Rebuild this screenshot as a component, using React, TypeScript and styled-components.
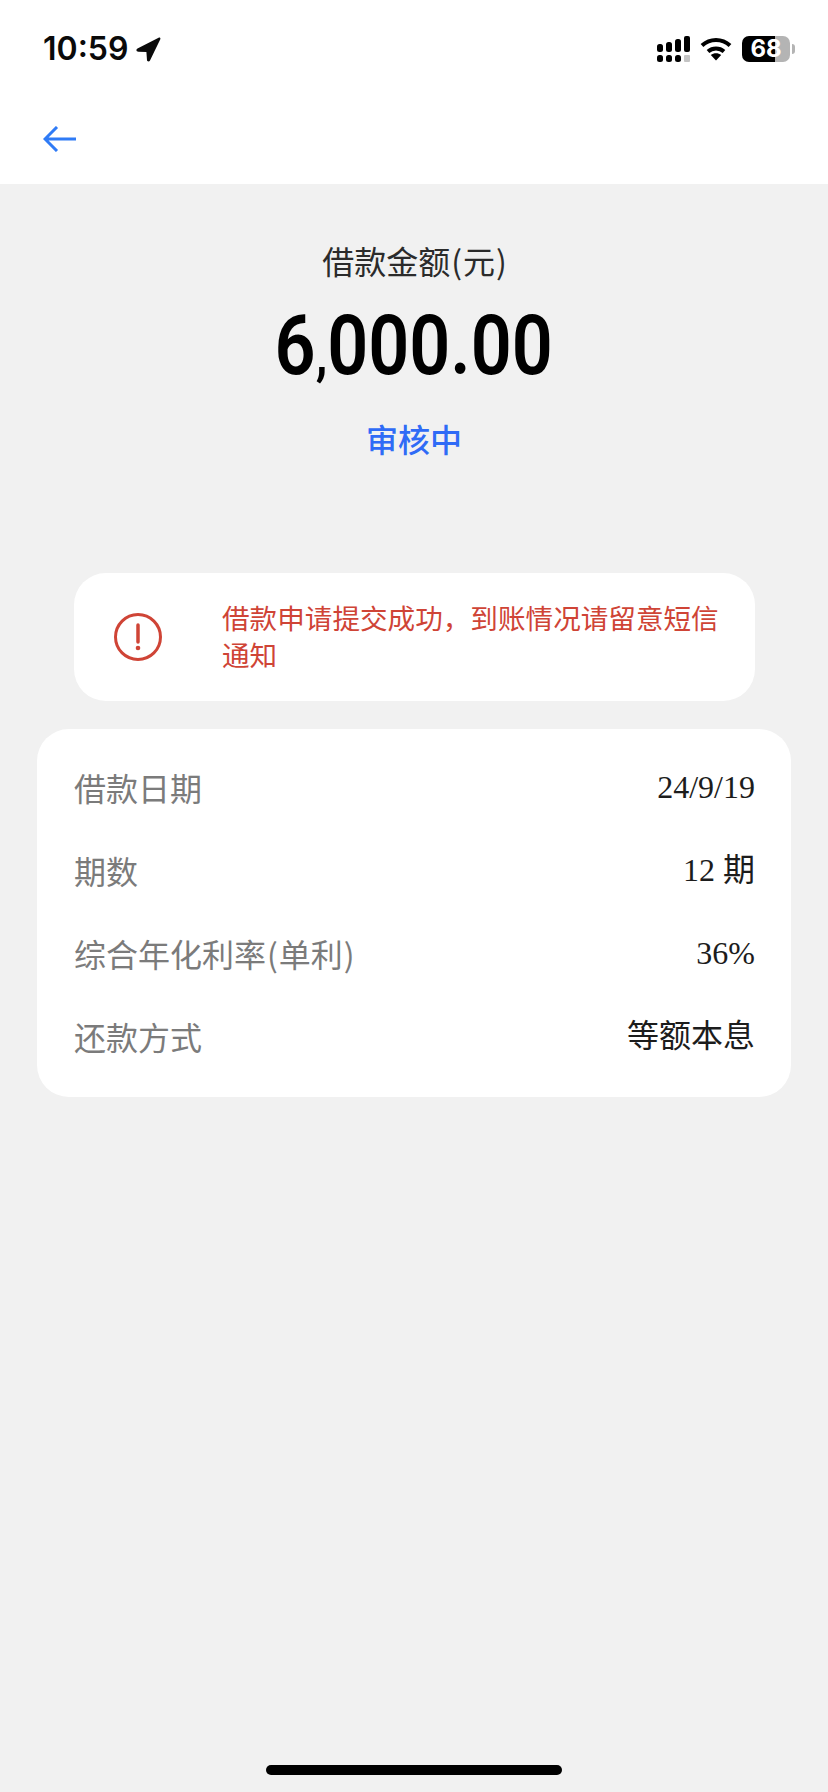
import styled, { createGlobalStyle } from "styled-components";

const GlobalStyle = createGlobalStyle`
  html, body {
    margin: 0;
    padding: 0;
    background: #f1f1f1;
  }
`;

const sans = `"Noto Sans CJK SC", "Noto Sans", sans-serif`;

const Page = styled.div`
  width: 828px;
  height: 1792px;
  display: flex;
  flex-direction: column;
  background: #f1f1f1;
  font-family: ${sans};
  overflow: hidden;
`;

const Header = styled.header`
  background: #fff;
  height: 184px;
  flex: none;
`;

const StatusBar = styled.div`
  height: 98px;
  padding: 0 38px 0 43px;
  display: flex;
  align-items: center;
  justify-content: space-between;
`;

const TimeGroup = styled.div`
  display: flex;
  align-items: center;
  gap: 8px;
`;

const Time = styled.span`
  font-family: Inter, sans-serif;
  font-size: 32px;
  font-weight: 600;
  line-height: 1;
  color: #0a0a0a;
`;

const StatusIcons = styled.div`
  display: flex;
  align-items: center;
  gap: 10px;
`;

const Battery = styled.div`
  position: relative;
  width: 48px;
  height: 26px;
  border-radius: 7px;
  background: linear-gradient(to right, #000 0 33px, #b4b4b4 33px 48px);
  color: #fff;
  font-family: Inter, sans-serif;
  font-size: 24px;
  font-weight: 700;
  line-height: 26px;
  text-align: center;

  &::after {
    content: "";
    position: absolute;
    right: -5px;
    top: 8px;
    width: 3px;
    height: 10px;
    border-radius: 0 3px 3px 0;
    background: #b4b4b4;
  }
`;

const Nav = styled.div`
  padding: 28px 0 0 43px;
  height: 58px;
  box-sizing: border-box;
  display: flex;
  align-items: flex-start;
`;

const Summary = styled.section`
  padding-top: 54px;
  height: 389px;
  box-sizing: border-box;
  display: flex;
  flex-direction: column;
  align-items: center;
  flex: none;
`;

const SummaryTitle = styled.div`
  font-size: 32px;
  line-height: 44px;
  color: #2b2b2b;
  transform: translateX(1px);
`;

const Paren = styled.span`
  margin: 0 1px;
`;

const Amount = styled.div`
  margin-top: 16px;
  font-family: Roboto, sans-serif;
  font-size: 84px;
  font-weight: 600;
  line-height: 96px;
  color: #000;
  transform: scaleX(0.855);
`;

const AmountComma = styled.span`
  font-size: 58px;
  line-height: 0;
`;

const Status = styled.div`
  margin-top: 22px;
  font-size: 32px;
  font-weight: 500;
  line-height: 44px;
  color: #2f6bf6;
`;

const Notice = styled.section`
  margin: 0 73px 0 74px;
  height: 128px;
  box-sizing: border-box;
  background: #fff;
  border-radius: 32px;
  padding: 0 36px 0 40px;
  display: flex;
  align-items: center;
  gap: 60px;
  flex: none;
`;

const NoticeText = styled.div`
  flex: 1;
  padding-bottom: 2px;
  font-size: 27.6px;
  line-height: 37px;
  color: #cf4436;
`;

const DetailCard = styled.section`
  margin: 28px 37px 0 37px;
  padding: 16px 36px 20px 37px;
  background: #fff;
  border-radius: 32px;
  flex: none;
`;

const Row = styled.div`
  height: 83px;
  display: flex;
  align-items: center;
  justify-content: space-between;
`;

const Label = styled.span`
  font-size: 32px;
  line-height: 44px;
  color: #7b7b7b;
`;

const Value = styled.span`
  font-family: "Liberation Serif", "Noto Sans CJK SC", serif;
  font-size: 32px;
  line-height: 44px;
  color: #1c1c1c;
`;

const HomeIndicator = styled.div`
  width: 296px;
  height: 10px;
  margin: auto auto 17px;
  border-radius: 5px;
  background: #000;
`;

const LocationArrow = () => (
  <svg width="25" height="25" viewBox="0 0 25 25">
    <path
      d="M1.500 11.500 22.600.700c1.100-.6 2.200.5 1.700 1.600L14 23.600c-.6 1.200-2.800 1.200-3-.3l-.6-8.300-7.900-.2c-2.300 0-2.800-2.500-1-3.300Z"
      fill="#0a0a0a"
    />
  </svg>
);

const SignalDots = () => (
  <svg width="33" height="27" viewBox="0 0 33 27">
    <g fill="#000">
      <rect x="0" y="8" width="6" height="8" rx="2.500" />
      <rect x="9" y="6" width="6" height="10" rx="2.500" />
      <rect x="18" y="3" width="6" height="13" rx="2.500" />
      <rect x="27" y="0" width="6" height="16" rx="2" />
      <rect x="0" y="19" width="6" height="7" rx="2.500" />
      <rect x="9" y="19" width="6" height="7" rx="2.500" />
      <rect x="18" y="19" width="6" height="7" rx="2.500" />
    </g>
    <rect x="27" y="19" width="6" height="7" rx="1" fill="#c4c4c4" />
  </svg>
);

const Wifi = () => (
  <svg width="32" height="24" viewBox="0 0 32 24">
    <g fill="none" stroke="#000" strokeWidth="4">
      <path d="M2 8.500C10 1 22 1 30 8.500" />
      <path d="M8 14.500c4.600-4 11.400-4 16 0" />
    </g>
    <path d="M16 23.500 10.800 18c3-2.400 7.400-2.400 10.400 0Z" fill="#000" />
  </svg>
);

const BackArrow = () => (
  <svg width="33" height="26" viewBox="0 0 33 26">
    <path
      d="M33 13H2M14 1 2 13l12 12"
      fill="none"
      stroke="#2f7bf6"
      strokeWidth="3"
    />
  </svg>
);

const AlertIcon = () => (
  <svg width="48" height="48" viewBox="0 0 48 48">
    <circle cx="24" cy="24" r="22.500" fill="none" stroke="#cf4436" strokeWidth="3" />
    <path d="M24 12v17" stroke="#cf4436" strokeWidth="3.500" strokeLinecap="round" />
    <circle cx="24" cy="35" r="2.300" fill="#cf4436" />
  </svg>
);

const App = () => {
  return (
    <Page>
      <GlobalStyle />
      <Header>
        <StatusBar>
          <TimeGroup>
            <Time>10:59</Time>
            <LocationArrow />
          </TimeGroup>
          <StatusIcons>
            <SignalDots />
            <Wifi />
            <Battery>68</Battery>
          </StatusIcons>
        </StatusBar>
        <Nav>
          <BackArrow />
        </Nav>
      </Header>

      <Summary>
        <SummaryTitle>
          借款金额<Paren>(</Paren>元<Paren>)</Paren>
        </SummaryTitle>
        <Amount>
          6<AmountComma>,</AmountComma>000.00
        </Amount>
        <Status>审核中</Status>
      </Summary>

      <Notice>
        <AlertIcon />
        <NoticeText>借款申请提交成功，到账情况请留意短信通知</NoticeText>
      </Notice>

      <DetailCard>
        <Row>
          <Label>借款日期</Label>
          <Value>24/9/19</Value>
        </Row>
        <Row>
          <Label>期数</Label>
          <Value>12 期</Value>
        </Row>
        <Row>
          <Label>
            综合年化利率<Paren>(</Paren>单利<Paren>)</Paren>
          </Label>
          <Value>36%</Value>
        </Row>
        <Row>
          <Label>还款方式</Label>
          <Value>等额本息</Value>
        </Row>
      </DetailCard>

      <HomeIndicator />
    </Page>
  );
};

export default App;
